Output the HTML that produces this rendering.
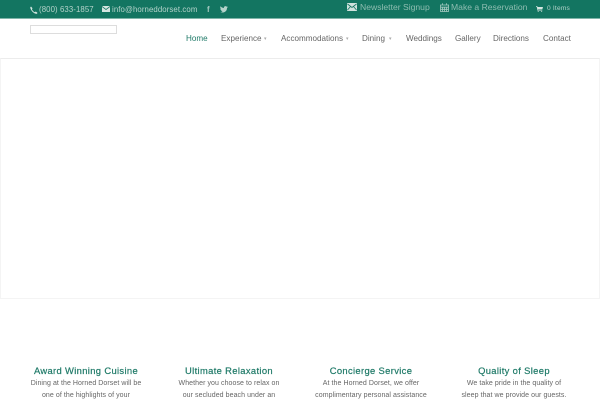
<!DOCTYPE html>
<html><head><meta charset="utf-8"><style>
html,body{margin:0;padding:0;background:#fff}
body{width:600px;height:400px;overflow:hidden;position:relative;font-family:"Liberation Sans",sans-serif}
.t{position:absolute;white-space:nowrap;line-height:1}
svg{position:absolute}
#bar{position:absolute;left:0;top:0;width:600px;height:18px;background:#137561;border-bottom:1px solid #7fb5a9}
.b{color:#b5d3cb;font-size:7.8px;top:6px;letter-spacing:.1px}
.bb{color:#8fbdb1;font-size:8.6px;top:3px;letter-spacing:0}
.n{color:#666;font-size:8.1px;top:35px;letter-spacing:0}
.h{color:#1f7a68;font-size:9.4px;font-weight:normal;top:366px;width:150px;text-align:center;letter-spacing:.35px;-webkit-text-stroke:.2px #1f7a68}
.p{color:#666;font-size:7px;width:150px;text-align:center;letter-spacing:.07px}
</style></head><body>
<div id="bar"></div>
<svg style="left:30px;top:6px" width="8" height="8" viewBox="0 0 8 8"><path d="M1 .5 2.5 2.3 1.900 3.200C2.600 4.700 3.500 5.600 4.900 6.200L5.800 5.500 7.600 7 6.600 7.900C3.600 7.600 .8 4.600 .2 1.500Z" fill="#d5e6e1"/></svg>
<div class="t b" style="left:39px">(800) 633-1857</div>
<svg style="left:102px;top:6px" width="8" height="6" viewBox="0 0 8 6"><path d="M0 0H8L4 3ZM0 1 4 4 8 1V6H0Z" fill="#d5e6e1"/></svg>
<div class="t b" style="left:112px">info@horneddorset.com</div>
<div class="t b" style="left:207px;font-weight:bold;color:#a9cbc3">f</div>
<svg style="left:220px;top:6px" width="8" height="7" viewBox="0 0 8 7"><path d="M0 6C3 7.400 7 6 7 2L8 1 7 1.200 7.800 .3 6.800 .7C5.500-.5 3.500 .5 4 2 2.500 2 1.200 1.200 .5 .3 0 1.400 .3 2.400 1 3L.3 2.800C.4 3.700 1 4.300 1.800 4.500L1.100 4.500C1.400 5.200 2 5.500 2.600 5.600 1.800 6.100 .9 6.200 0 6Z" fill="#b5d3cb"/></svg>
<svg style="left:347px;top:3px" width="10" height="8" viewBox="0 0 10 8"><rect width="10" height="8" rx=".6" fill="#cfe2dd"/><path d="M.5 1 5 4.500 9.500 1M.5 7 3.500 3.500M9.500 7 6.500 3.500" fill="none" stroke="#137561" stroke-width=".8"/></svg>
<div class="t bb" style="left:360px">Newsletter Signup</div>
<svg style="left:440px;top:3px" width="9" height="9" viewBox="0 0 9 9"><path d="M.5 2H8.500V8.500H.5ZM.5 4.200H8.500M.5 6.300H8.500M2.500 4.200V8.500M4.500 4.200V8.500M6.500 4.200V8.500M2.500 .3V2M6.500 .3V2" fill="none" stroke="#a9cbc3" stroke-width=".8"/></svg>
<div class="t bb" style="left:451px">Make a Reservation</div>
<svg style="left:536px;top:6px" width="7" height="6" viewBox="0 0 7 6"><path d="M0 0H1.200L1.500 1H7L6.300 3.500H2L2.200 4.200H6.300V4.800H1.600L.7 .6H0Z" fill="#d5e6e1"/><circle cx="2.200" cy="5.500" r=".5" fill="#d5e6e1"/><circle cx="5.700" cy="5.500" r=".5" fill="#d5e6e1"/></svg>
<div class="t" style="left:547px;top:6px;font-size:6.6px;color:#b5d3cb;letter-spacing:.2px">0 Items</div>

<div style="position:absolute;left:30px;top:25px;width:85px;height:7px;border:1px solid #ddd;background:#fff"></div>

<div class="t n" style="left:186px;color:#1f7a68">Home</div>
<div class="t n" style="left:221px">Experience</div><div class="t n" style="left:264px;color:#aaa;font-size:5px;top:37px">▾</div>
<div class="t n" style="left:281px">Accommodations</div><div class="t n" style="left:346px;color:#aaa;font-size:5px;top:37px">▾</div>
<div class="t n" style="left:362px">Dining</div><div class="t n" style="left:389px;color:#aaa;font-size:5px;top:37px">▾</div>
<div class="t n" style="left:406px">Weddings</div>
<div class="t n" style="left:455px">Gallery</div>
<div class="t n" style="left:493px">Directions</div>
<div class="t n" style="left:543px">Contact</div>

<div style="position:absolute;left:0;top:58px;width:600px;height:241px;box-sizing:border-box;border:1px solid #f4f4f4;border-top-color:#ececec;background:#fff"></div>

<div class="t h" style="left:11px">Award Winning Cuisine</div>
<div class="t h" style="left:154px">Ultimate Relaxation</div>
<div class="t h" style="left:296px">Concierge Service</div>
<div class="t h" style="left:439px">Quality of Sleep</div>

<div class="t p" style="left:11px;top:380px">Dining at the Horned Dorset will be</div>
<div class="t p" style="left:11px;top:392px">one of the highlights of your</div>
<div class="t p" style="left:154px;top:380px">Whether you choose to relax on</div>
<div class="t p" style="left:154px;top:392px">our secluded beach under an</div>
<div class="t p" style="left:296px;top:380px">At the Horned Dorset, we offer</div>
<div class="t p" style="left:296px;top:392px">complimentary personal assistance</div>
<div class="t p" style="left:439px;top:380px">We take pride in the quality of</div>
<div class="t p" style="left:439px;top:392px">sleep that we provide our guests.</div>
</body></html>
